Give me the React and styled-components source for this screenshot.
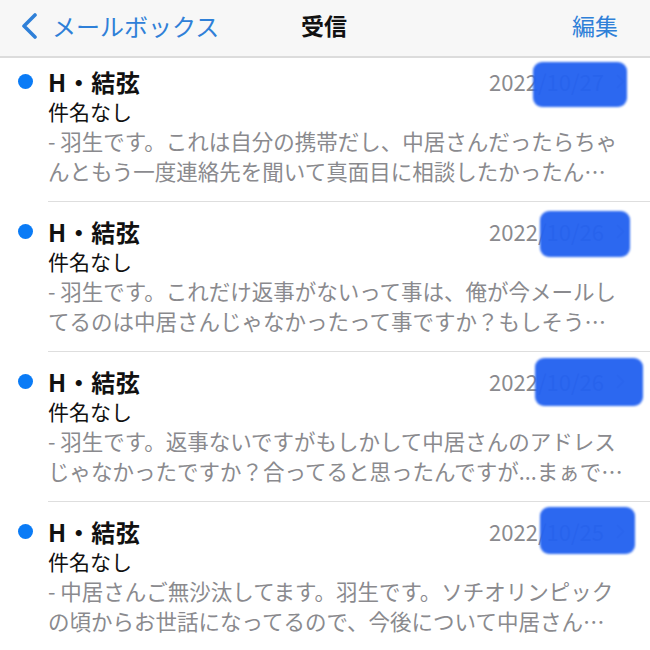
import styled, { createGlobalStyle } from "styled-components";

const GlobalStyle = createGlobalStyle`
  html, body {
    margin: 0;
    padding: 0;
    background: #ffffff;
  }
  body {
    font-family: "Noto Sans CJK JP", "Noto Sans", sans-serif;
    -webkit-font-smoothing: antialiased;
  }
`

const Screen = styled.div`
  width: 650px;
  height: 650px;
  overflow: hidden;
  background: #ffffff;
`

const NavBar = styled.div`
  height: 56px;
  display: grid;
  grid-template-columns: 1fr auto 1fr;
  align-items: center;
  background: #f7f7f7;
  border-bottom: 2px solid #dcdcdc;
  padding: 0 32px 0 30px;
`

const BackButton = styled.div`
  display: flex;
  align-items: center;
  gap: 14px;
  margin-left: -10px;
  color: #2f80d8;
  font-size: 24px;
  line-height: 1;
  margin-top: -4px;
`

const Title = styled.div`
  font-size: 23px;
  font-weight: 700;
  color: #111111;
  margin-top: -7px;
`

const EditButton = styled.div`
  justify-self: end;
  color: #2f80d8;
  font-size: 23px;
  margin-top: -7px;
`

const List = styled.div`
  display: flex;
  flex-direction: column;
`

const Row = styled.div`
  position: relative;
  display: grid;
  grid-template-columns: 48px 1fr;
`

const DotCell = styled.div`
  display: flex;
  justify-content: center;
  padding-top: ${p => p.$first ? 8 : 14}px;
  padding-left: 2px;
`

const UnreadDot = styled.span`
  width: 15px;
  height: 15px;
  margin-top: 8px;
  border-radius: 50%;
  background: #0a7bf6;
`

const Body = styled.div`
  padding: ${p => p.$first ? 8 : 14}px 25px 15px 0;
  border-bottom: 1.5px solid #dedede;
`

const TopLine = styled.div`
  display: flex;
  justify-content: space-between;
  align-items: center;
  height: 30px;
`

const Sender = styled.div`
  font-size: 24px;
  font-weight: 700;
  color: #111111;
  letter-spacing: 0.5px;
`

const DateText = styled.div`
  display: flex;
  align-items: center;
  gap: 12px;
  font-size: 22px;
  color: #8a8a8e;
`

const Subject = styled.div`
  font-size: 21px;
  line-height: 30px;
  color: #111111;
`

const Preview = styled.div`
  font-size: 21.5px;
  line-height: 30px;
  color: #8a8a8e;
  white-space: nowrap;
`

const Redaction = styled.div`
  position: absolute;
  top: ${p => p.$top}px;
  left: ${p => p.$left}px;
  width: ${p => p.$w}px;
  height: ${p => p.$h}px;
  background: #2462f0;
  opacity: 0.96;
  border-radius: 9px;
  filter: blur(1.2px);
`

const Chevron = () => (
  <svg width="9" height="15" viewBox="0 0 9 15">
    <path d="M1.5 1.5 L7.5 7.5 L1.5 13.5" fill="none" stroke="#c4c4c8" strokeWidth="1.8" strokeLinecap="round" strokeLinejoin="round" />
  </svg>
)

const BackChevron = () => (
  <svg width="18" height="26" viewBox="0 0 18 26">
    <path d="M15 2 L4 13 L15 24" fill="none" stroke="#2f80d8" strokeWidth="3.6" strokeLinecap="round" strokeLinejoin="round" />
  </svg>
)

const mails = [
  {
    date: "2022/10/27",
    lines: ["- 羽生です。これは自分の携帯だし、中居さんだったらちゃ", "んともう一度連絡先を聞いて真面目に相談したかったん…"],
    blot: { top: 4, left: 533, w: 94, h: 45 },
  },
  {
    date: "2022/10/26",
    lines: ["- 羽生です。これだけ返事がないって事は、俺が今メールし", "てるのは中居さんじゃなかったって事ですか？もしそう…"],
    blot: { top: 9, left: 540, w: 90, h: 46 },
  },
  {
    date: "2022/10/26",
    lines: ["- 羽生です。返事ないですがもしかして中居さんのアドレス", "じゃなかったですか？合ってると思ったんですが...まぁで…"],
    blot: { top: 6, left: 535, w: 108, h: 48 },
  },
  {
    date: "2022/10/25",
    lines: ["- 中居さんご無沙汰してます。羽生です。ソチオリンピック", "の頃からお世話になってるので、今後について中居さん…"],
    blot: { top: 5, left: 540, w: 95, h: 47 },
  },
]

const MailRow = ({ mail, first }) => (
  <Row>
    <DotCell $first={first}>
      <UnreadDot />
    </DotCell>
    <Body $first={first}>
      <TopLine>
        <Sender>H・結弦</Sender>
        <DateText>
          {mail.date}
          <Chevron />
        </DateText>
      </TopLine>
      <Subject>件名なし</Subject>
      {mail.lines.map((line, i) => (
        <Preview key={i}>{line}</Preview>
      ))}
    </Body>
    <Redaction $top={mail.blot.top} $left={mail.blot.left} $w={mail.blot.w} $h={mail.blot.h} />
  </Row>
)

const App = () => {
  return (
    <>
      <GlobalStyle />
      <Screen>
        <NavBar>
          <BackButton>
            <BackChevron />
            メールボックス
          </BackButton>
          <Title>受信</Title>
          <EditButton>編集</EditButton>
        </NavBar>
        <List>
          {mails.map((mail, i) => (
            <MailRow key={i} mail={mail} first={i === 0} />
          ))}
        </List>
      </Screen>
    </>
  )
}

export default App
